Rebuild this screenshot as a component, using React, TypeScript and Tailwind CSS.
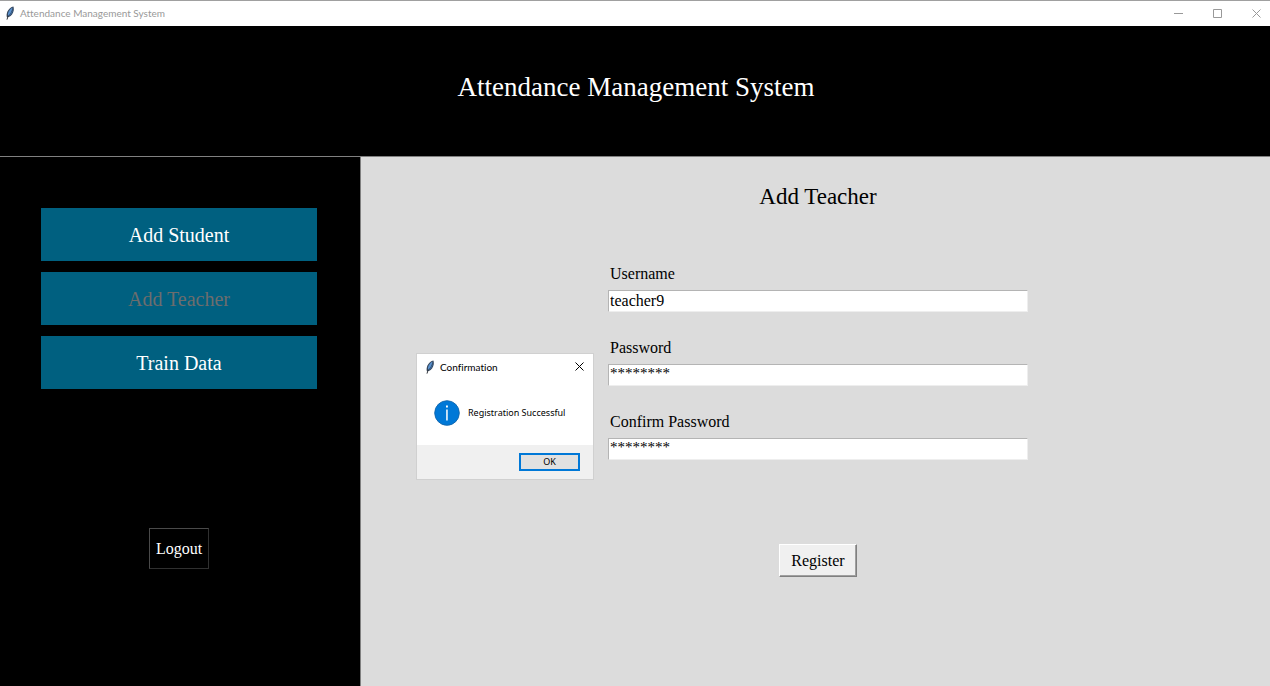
import { useState } from "react";

function Feather({ className }: { className: string }) {
  return (
    <svg viewBox="0 0 10 14" className={className} aria-hidden="true">
      <path d="M8.400 0.400C6.200 0.800 3.400 3 2.300 5.800C1.600 7.600 1.400 9.600 1.900 11.200L3.800 11C6.500 9.800 8.200 7.200 8.700 4.400C8.900 3 8.800 1.400 8.400 0.400Z" fill="#35475e" />
      <path d="M7.600 1.600C5.400 2.800 3.600 4.900 3 7.400L3 10C4.900 8.500 7 5 7.600 1.600Z" fill="#5b93d0" />
      <path d="M8.100 2.800C7.300 5.400 5.600 8 3.800 10C6 9 7.700 6.800 8.100 2.800Z" fill="#3a70ad" />
      <path d="M3.200 9.600L2 13.600" fill="none" stroke="#33373d" strokeWidth="1" />
    </svg>
  );
}

function CloseGlyph({ className }: { className: string }) {
  return (
    <svg viewBox="0 0 9 9" className={className} aria-hidden="true">
      <path d="M0.500 0.500L8.500 8.500M8.500 0.500L0.500 8.500" fill="none" stroke="currentColor" strokeWidth="1" />
    </svg>
  );
}

function TitleBar() {
  return (
    <div className="flex h-[26px] shrink-0 items-center border-t border-[#a0a0a0] bg-white pb-px pl-[5px] font-['Lato','Open_Sans',sans-serif] text-[#999999]">
      <Feather className="h-[14px] w-[10px]" />
      <span className="ml-[5px] text-[10px] leading-4 [font-variant-ligatures:none]">Attendance Management System</span>
      <div className="ml-auto flex h-full">
        <button aria-label="Minimize" className="flex w-[39px] items-center justify-center">
          <svg viewBox="0 0 9 9" className="size-[9px]" aria-hidden="true">
            <path d="M0 4.500H9" stroke="currentColor" />
          </svg>
        </button>
        <button aria-label="Maximize" className="flex w-[39px] items-center justify-center">
          <svg viewBox="0 0 9 9" className="size-[9px]" aria-hidden="true">
            <path d="M0.500 0.500H8.500V8.500H0.500Z" fill="none" stroke="currentColor" />
          </svg>
        </button>
        <button aria-label="Close" className="flex w-[33px] items-center justify-end pr-[9px]">
          <CloseGlyph className="size-[9px]" />
        </button>
      </div>
    </div>
  );
}

function NavButton({ label, disabled }: { label: string; disabled?: boolean }) {
  return (
    <button
      disabled={disabled}
      className="h-[53px] w-[276px] bg-[#006080] text-[20px] leading-6 text-white disabled:text-[#6d6d6d]"
    >
      {label}
    </button>
  );
}

function Field({ id, label, initial, masked }: { id: string; label: string; initial: string; masked?: boolean }) {
  const [value, setValue] = useState(initial);
  return (
    <div className="flex flex-col gap-1">
      <label htmlFor={id} className="pl-[2px] text-[16px] leading-6">
        {label}
      </label>
      <input
        id={id}
        autoComplete="off"
        value={value}
        onChange={(e) => setValue(e.target.value)}
        className={`h-[22px] w-full border border-t-[#b4b4b4] border-r-[#eeeeee] border-b-[#eeeeee] border-l-[#b4b4b4] bg-white px-px outline-none ${
          masked ? "pb-[3px] text-[15px] leading-4" : "text-[16px] leading-5"
        }`}
      />
    </div>
  );
}

function Confirmation() {
  return (
    <div
      role="dialog"
      aria-labelledby="confirm-title"
      className="absolute top-[196px] left-[55px] flex w-[178px] flex-col border border-[#d0d0d0] bg-white font-['Noto_Sans','Open_Sans',sans-serif] text-black"
    >
      <div className="flex h-[26px] items-center pr-[9px] pb-px pl-2">
        <Feather className="h-[14px] w-[10px]" />
        <h3
          id="confirm-title"
          className="ml-[5px] font-['Lato','Open_Sans',sans-serif] text-[10px] leading-4 [font-variant-ligatures:none]"
        >
          Confirmation
        </h3>
        <button aria-label="Close dialog" className="ml-auto">
          <CloseGlyph className="size-[9px]" />
        </button>
      </div>
      <div className="flex h-[65px] items-center gap-2 pl-[17px]">
        <svg viewBox="0 0 26 26" className="size-[26px] shrink-0" aria-hidden="true">
          <circle cx="13" cy="13" r="12.300" fill="#0078d7" stroke="#1265ab" strokeWidth="0.900" />
          <rect x="12.200" y="9.500" width="1.500" height="11" fill="#fff" />
          <rect x="12" y="5.500" width="1.900" height="2" fill="#fff" />
        </svg>
        <p className="text-[9px] leading-4 whitespace-nowrap">Registration Successful</p>
      </div>
      <div className="flex h-[34px] items-center justify-end bg-[#f0f0f0] pr-[13px]">
        <button className="h-[18px] w-[61px] border-2 border-[#0078d7] bg-[#e1e1e1] text-[9px] leading-3">OK</button>
      </div>
    </div>
  );
}

export default function App() {
  return (
    <div className="flex min-h-screen flex-col bg-black font-['Liberation_Serif',serif]">
      <TitleBar />
      <header className="flex h-[131px] shrink-0 justify-center border-b border-[#808080] bg-black pt-[45px] pl-[2px]">
        <h1 className="text-[27px] leading-8 text-white">Attendance Management System</h1>
      </header>
      <div className="flex grow">
        <nav className="flex w-[361px] shrink-0 flex-col items-center border-r border-[#808080] bg-black pt-[51px] pr-[2px] text-white">
          <div className="flex flex-col gap-[11px]">
            <NavButton label="Add Student" />
            <NavButton label="Add Teacher" disabled />
            <NavButton label="Train Data" />
          </div>
          <button className="mt-[139px] h-[41px] w-[60px] border border-[#4a4a4a] border-r-[#303030] border-b-[#303030] text-[16px] leading-6">
            Logout
          </button>
        </nav>
        <main className="relative flex grow flex-col items-center bg-[#dcdcdc] pt-6 pl-[5px] text-black">
          <h2 className="text-[23px] leading-8">Add Teacher</h2>
          <form className="mt-[49px] flex w-full max-w-[420px] flex-col gap-6" onSubmit={(e) => e.preventDefault()}>
            <Field id="username" label="Username" initial="teacher9" />
            <Field id="password" label="Password" initial="********" masked />
            <Field id="confirm-password" label="Confirm Password" initial="********" masked />
            <button
              type="submit"
              className="mt-[60px] h-[33px] w-[78px] self-center border border-t-white border-r-[#808080] border-b-[#808080] border-l-white bg-[#f0f0f0] text-[16px] leading-6 shadow-[inset_-1px_-1px_0_#a0a0a0]"
            >
              Register
            </button>
          </form>
          <Confirmation />
        </main>
      </div>
    </div>
  );
}
